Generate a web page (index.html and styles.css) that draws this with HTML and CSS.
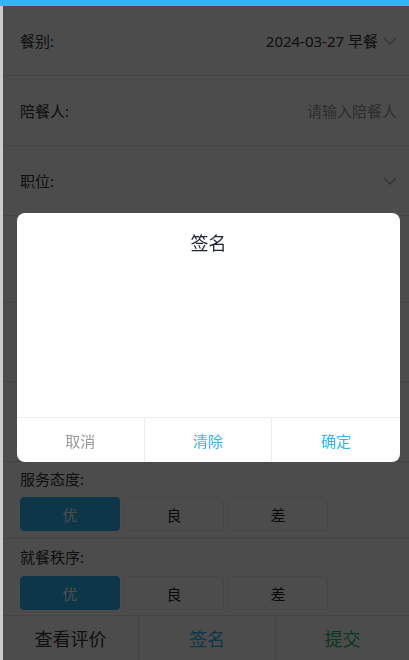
FILE: index.html
```html
<!DOCTYPE html>
<html lang="zh-CN">
<head>
<meta charset="utf-8">
<title>陪餐评价</title>
<link rel="stylesheet" href="styles.css">
</head>
<body>
<div class="topbar"></div>
<main class="page">
  <div class="row">
    <span class="label">餐别:</span>
    <span class="value">2024-03-27 早餐
      <svg class="chev" viewBox="0 0 14 8" width="14" height="8"><polyline points="1,1 7,7 13,1" fill="none" stroke="#a8a8a8" stroke-width="1.3"/></svg>
    </span>
  </div>
  <div class="row">
    <span class="label">陪餐人:</span>
    <span class="placeholder">请输入陪餐人</span>
  </div>
  <div class="row">
    <span class="label">职位:</span>
    <span class="value">
      <svg class="chev" viewBox="0 0 14 8" width="14" height="8"><polyline points="1,1 7,7 13,1" fill="none" stroke="#a8a8a8" stroke-width="1.3"/></svg>
    </span>
  </div>
  <div class="row row-tall">
    <span class="label">菜品:</span>
  </div>
  <div class="row row-mid">
    <span class="label">菜品质量:</span>
  </div>
  <div class="row row-mid2">
    <span class="label">卫生状况:</span>
  </div>
  <section class="rate">
    <div class="rate-label">服务态度:</div>
    <div class="opts">
      <span class="opt on">优</span>
      <span class="opt">良</span>
      <span class="opt">差</span>
    </div>
  </section>
  <section class="rate rate-last">
    <div class="rate-label">就餐秩序:</div>
    <div class="opts">
      <span class="opt on">优</span>
      <span class="opt">良</span>
      <span class="opt">差</span>
    </div>
  </section>
  <nav class="actions">
    <span class="act">查看评价</span>
    <span class="act act-blue">签名</span>
    <span class="act act-green">提交</span>
  </nav>
</main>
<div class="mask"></div>
<div class="modal">
  <div class="modal-title">签名</div>
  <div class="modal-body"></div>
  <div class="modal-foot">
    <span class="mbtn mbtn-cancel">取消</span>
    <span class="mbtn mbtn-blue">清除</span>
    <span class="mbtn mbtn-blue">确定</span>
  </div>
</div>
</body>
</html>
```
FILE: styles.css
```css
html, body {
  margin: 0;
  padding: 0;
  height: 660px;
  overflow: hidden;
}
body {
  background: #cbcbcb;
  font-family: "Noto Sans", "Noto Sans CJK SC", sans-serif;
  color: #333;
}
.topbar {
  height: 6px;
  background: #2db7f5;
  position: relative;
  z-index: 3;
}
.page {
  margin-left: 3px;
  height: 654px;
  background: #fff;
  display: flex;
  flex-direction: column;
}
.row {
  height: 69px;
  flex: none;
  border-bottom: 1px solid #e3e3e3;
  display: flex;
  align-items: center;
  justify-content: space-between;
  padding: 0 12px 0 17px;
  font-size: 15px;
  line-height: 20px;
}
.row-tall { height: 86px; }
.row-mid { height: 78px; }
.row-mid2 { height: 79px; }
.label { color: #333; }
.value {
  display: flex;
  align-items: center;
  gap: 5px;
  color: #333;
}
.chev { display: block; }
.placeholder { color: #999; }
.rate {
  flex: none;
  padding: 7px 0 7px 17px;
  border-bottom: 1px solid #e3e3e3;
}
.rate-last {
  padding-top: 8px;
  padding-bottom: 5px;
}
.rate-label {
  font-size: 15px;
  line-height: 20px;
  margin-bottom: 8px;
}
.rate-last .rate-label { margin-bottom: 9px; }
.opts {
  display: flex;
  gap: 4px;
}
.opt {
  width: 100px;
  height: 34px;
  box-sizing: border-box;
  border: 1px solid #ececec;
  border-radius: 4px;
  display: flex;
  align-items: center;
  justify-content: center;
  font-size: 15px;
  color: #222;
}
.opt.on {
  background: #2db7f5;
  border-color: #2db7f5;
  color: #fff;
}
.actions {
  flex: 1;
  display: grid;
  grid-template-columns: 136px 137px 1fr;
}
.act {
  display: flex;
  align-items: center;
  justify-content: center;
  font-size: 18px;
  color: #333;
  border-right: 1px solid #e3e3e3;
}
.act:last-child { border-right: none; }
.act-blue { color: #2db7f5; }
.act-green { color: #19be6b; }
.mask {
  position: fixed;
  top: 6px;
  left: 3px;
  right: 0;
  bottom: 0;
  background: rgba(0, 0, 0, 0.7);
  z-index: 1;
}
.modal {
  position: fixed;
  left: 17px;
  top: 213px;
  width: 383px;
  height: 249px;
  background: #fff;
  border-radius: 8px;
  z-index: 2;
  display: flex;
  flex-direction: column;
  overflow: hidden;
}
.modal-title {
  padding-top: 18px;
  text-align: center;
  font-size: 18px;
  line-height: 24px;
  color: #1c2438;
}
.modal-body { flex: 1; }
.modal-foot {
  height: 44px;
  border-top: 1px solid #ececec;
  display: grid;
  grid-template-columns: 1fr 1fr 1fr;
}
.mbtn {
  display: flex;
  align-items: center;
  justify-content: center;
  font-size: 15px;
  border-right: 1px solid #ececec;
}
.mbtn:last-child { border-right: none; }
.mbtn-cancel { color: #999; }
.mbtn-blue { color: #2db7f5; }
```
